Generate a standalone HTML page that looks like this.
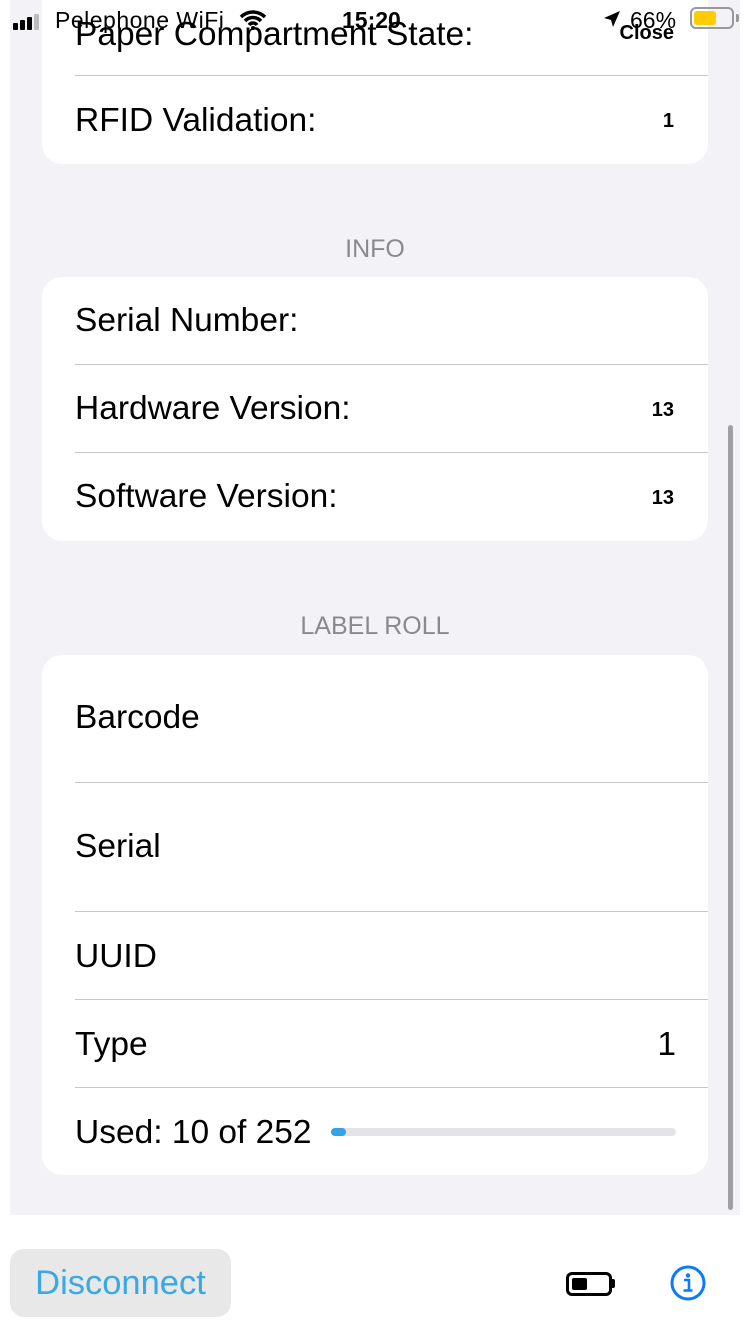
<!DOCTYPE html>
<html><head><meta charset="utf-8"><style>
*{margin:0;padding:0;box-sizing:border-box}
body{width:750px;height:1334px;background:#fff;font-family:"Liberation Sans",sans-serif;position:relative;overflow:hidden}
.bg{position:absolute;left:10px;top:0;width:730px;height:1215px;background:#f2f2f7}
.card{position:absolute;left:42px;width:666px;background:#fff;border-radius:20px;overflow:hidden}
.row{position:absolute;left:33px;right:0;font-size:33.5px;color:#000;white-space:nowrap}
.line{position:absolute;left:33px;right:0;height:1px;background:#c8c8cc}
.val{position:absolute;right:34px;font-size:20px;font-weight:bold}
.hdr{position:absolute;left:0;width:750px;text-align:center;font-size:25px;color:#8a8a8e}
</style></head><body>
<div class="bg"></div>
<div class="card" style="top:-20px;height:184px">
<div class="row" style="top:36px">Paper Compartment State:</div>
<div class="line" style="top:95px"></div>
<div class="row" style="top:122px">RFID Validation:</div>
<div class="val" style="top:130px">1</div>
</div>
<div style="position:absolute;right:76px;top:22px;font-size:20px;font-weight:bold">Close</div>
<div class="hdr" style="top:235px">INFO</div>
<div class="card" style="top:277px;height:264px">
<div class="row" style="top:25px">Serial Number:</div>
<div class="line" style="top:87px"></div>
<div class="row" style="top:113px">Hardware Version:</div>
<div class="val" style="top:122px">13</div>
<div class="line" style="top:175px"></div>
<div class="row" style="top:201px">Software Version:</div>
<div class="val" style="top:210px">13</div>
</div>
<div class="hdr" style="top:612px">LABEL ROLL</div>
<div class="card" style="top:655px;height:520px">
<div class="row" style="top:44px">Barcode</div>
<div class="line" style="top:127px"></div>
<div class="row" style="top:173px">Serial</div>
<div class="line" style="top:256px"></div>
<div class="row" style="top:283px">UUID</div>
<div class="line" style="top:344px"></div>
<div class="row" style="top:371px">Type</div>
<div class="row" style="top:371px;left:auto;right:32px">1</div>
<div class="line" style="top:432px"></div>
<div class="row" style="top:459px">Used: 10 of 252</div>
<div style="position:absolute;left:289px;top:473px;width:345px;height:8px;border-radius:4px;background:#e4e4e6"><div style="width:15px;height:8px;border-radius:4px;background:#30a4e6"></div></div>
</div>
<div style="position:absolute;left:728px;top:425px;width:5px;height:785px;border-radius:3px;background:#a0a0a4"></div>
<!-- status bar -->
<div style="position:absolute;left:13px;top:14px;display:flex;align-items:flex-end;gap:2px">
<div style="width:5px;height:7px;background:#000;border-radius:1px"></div><div style="width:5px;height:10px;background:#000;border-radius:1px"></div><div style="width:5px;height:13px;background:#000;border-radius:1px"></div><div style="width:5px;height:16px;background:#bbb;border-radius:1px"></div></div>
<div style="position:absolute;left:55px;top:7px;font-size:23px;letter-spacing:0.5px">Pelephone WiFi</div>
<svg style="position:absolute;left:238px;top:8px" width="30" height="22" viewBox="0 0 30 22"><path d="M3 9a17 17 0 0 1 24 0M7 13a11 11 0 0 1 16 0M11 17a5 5 0 0 1 8 0" stroke="#000" stroke-width="3.5" fill="none"/><circle cx="15" cy="20" r="2" fill="#000"/></svg>
<div style="position:absolute;left:342px;top:7px;font-size:23px;font-weight:bold">15:20</div>
<svg style="position:absolute;left:603px;top:10px" width="18" height="18" viewBox="0 0 18 18"><path d="M17 1 1 8l7 2 2 7z" fill="#000"/></svg>
<div style="position:absolute;left:630px;top:7px;font-size:23px">66%</div>
<div style="position:absolute;left:690px;top:7px;width:44px;height:22px;border:2px solid #999;border-radius:6px;padding:2px"><div style="width:22px;height:14px;background:#fc0;border-radius:3px"></div></div>
<div style="position:absolute;left:736px;top:14px;width:3px;height:8px;background:#999;border-radius:0 2px 2px 0"></div>
<!-- bottom -->
<div style="position:absolute;left:10px;top:1249px;width:221px;height:68px;border-radius:14px;background:#e8e8e8;color:#38a8e6;font-size:34.5px;text-align:center;line-height:68px">Disconnect</div>
<div style="position:absolute;left:566px;top:1272px;width:46px;height:24px;border:3px solid #000;border-radius:6px;padding:3px"><div style="width:15px;height:12px;background:#000;border-radius:2px"></div></div>
<div style="position:absolute;left:612px;top:1279px;width:3px;height:9px;background:#000;border-radius:0 2px 2px 0"></div>
<svg style="position:absolute;left:670px;top:1265px" width="36" height="36" viewBox="0 0 36 36"><circle cx="18" cy="18" r="16" stroke="#0a7aff" stroke-width="3" fill="none"/><circle cx="18" cy="10.5" r="2.2" fill="#0a7aff"/><path d="M14 15h5v10M13.5 25.5h9" stroke="#0a7aff" stroke-width="2.6" fill="none"/></svg>
</body></html>
